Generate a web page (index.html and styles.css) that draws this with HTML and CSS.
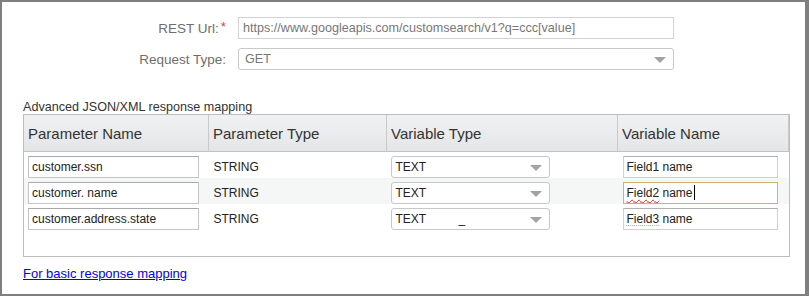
FILE: index.html
```html
<!DOCTYPE html>
<html lang="en">
<head>
  <meta charset="UTF-8" />
  <title>REST response mapping</title>
  <link rel="stylesheet" href="styles.css">
</head>
<body>
  <div class="frame">
    <div class="form-top">
      <div class="field-row">
        <label class="field-label">REST Url:<span class="req">*</span></label>
        <input type="text" class="field-input" value="https://www.googleapis.com/customsearch/v1?q=ccc[value]" readonly>
      </div>
      <div class="field-row">
        <label class="field-label">Request Type:</label>
        <div class="fake-select wide">GET<span class="arrow"></span></div>
      </div>
    </div>

    <div class="mapping-title">Advanced JSON/XML response mapping</div>
    <div class="mapping-box">
      <table class="mapping">
        <thead>
          <tr>
            <th class="c1">Parameter Name</th>
            <th class="c2">Parameter Type</th>
            <th class="c3">Variable Type</th>
            <th class="c4">Variable Name</th>
          </tr>
        </thead>
        <tbody>
          <tr>
            <td><input type="text" class="cell-input" value="customer.ssn" readonly></td>
            <td class="ptype">STRING</td>
            <td><div class="fake-select">TEXT<span class="arrow"></span></div></td>
            <td><div class="cell-input name-box">Field1 name</div></td>
          </tr>
          <tr class="alt">
            <td><input type="text" class="cell-input" value="customer. name" readonly></td>
            <td class="ptype">STRING</td>
            <td><div class="fake-select">TEXT<span class="arrow"></span></div></td>
            <td><div class="cell-input name-box focused"><span class="spell">Field2</span> name<span class="caret"></span></div></td>
          </tr>
          <tr>
            <td><input type="text" class="cell-input" value="customer.address.state" readonly></td>
            <td class="ptype">STRING</td>
            <td><div class="fake-select">TEXT<span class="stray">_</span><span class="arrow"></span></div></td>
            <td><div class="cell-input name-box"><span class="spell faint">Field3</span> name</div></td>
          </tr>
        </tbody>
      </table>
    </div>

    <a href="#" class="basic-link">For basic response mapping</a>
  </div>
</body>
</html>
```

FILE: styles.css
```css
html, body {
  margin: 0;
  padding: 0;
}

body {
  font-family: "Liberation Sans", Arial, sans-serif;
  background-color: #fff;
  color: #333;
}

.frame {
  width: 809px;
  height: 296px;
  box-sizing: border-box;
  border: 2px solid #7f7f7f;
  border-right-width: 4px;
  background-color: #fff;
  overflow: hidden;
}

.form-top {
  padding-top: 15px;
  display: flex;
  flex-direction: column;
  gap: 9px;
}

.field-row {
  display: flex;
  align-items: center;
}

.field-label {
  width: 224px;
  margin-right: 12px;
  text-align: right;
  font-size: 13.5px;
  color: #6e6e6e;
}

.req {
  color: #e23c3c;
  margin-left: 2px;
  position: relative;
  top: -2px;
}

.field-input {
  width: 436px;
  height: 22px;
  box-sizing: border-box;
  border: 1px solid #d2d2d2;
  padding: 0 4px;
  font-family: "Liberation Sans", Arial, sans-serif;
  font-size: 12.6px;
  color: #777;
  outline: none;
  margin: 0;
}

.fake-select {
  position: relative;
  width: 159px;
  height: 22px;
  box-sizing: border-box;
  border: 1px solid #c8c8c8;
  border-radius: 3px;
  padding: 0 4px;
  font-size: 12px;
  line-height: 20px;
  color: #222;
  background-color: #fff;
}

.fake-select.wide {
  width: 436px;
  padding-left: 6px;
  font-size: 12.6px;
  color: #777;
}

.arrow {
  position: absolute;
  right: 7px;
  top: 8px;
  width: 0;
  height: 0;
  border-left: 6px solid transparent;
  border-right: 6px solid transparent;
  border-top: 6px solid #a3a3a3;
}

.stray {
  position: absolute;
  left: 67px;
  top: 0;
}

.mapping-title {
  margin: 30px 0 0 21px;
  font-size: 12.6px;
  line-height: 14px;
  color: #333;
}

.mapping-box {
  margin-left: 21px;
  width: 767px;
  height: 143px;
  box-sizing: border-box;
  border: 1px solid #bdbdbd;
}

.mapping {
  border-collapse: collapse;
  table-layout: fixed;
  width: 765px;
}

.mapping th {
  height: 36px;
  padding: 0 0 0 4px;
  text-align: left;
  font-weight: normal;
  font-size: 15px;
  color: #333;
  background: linear-gradient(#f0f1f2, #e3e5e7);
  border-right: 1px solid #c9c9c9;
  border-bottom: 1px solid #c2c2c2;
}

.mapping th.c1 { width: 180px; }
.mapping th.c2 { width: 173px; }
.mapping th.c3 { width: 226px; }
.mapping th.c4 { width: 166px; }

.mapping td {
  height: 22px;
  padding: 4px 0 0 4px;
  vertical-align: top;
  font-size: 12px;
}

.mapping tr.alt td {
  background-color: #f5f6f6;
}

.ptype {
  line-height: 22px;
  padding-left: 5px !important;
  color: #222;
}

.cell-input {
  display: block;
  width: 171px;
  height: 22px;
  box-sizing: border-box;
  border: 1px solid #c4c4c4;
  border-top-color: #a9a9a9;
  padding: 0 3px;
  margin: 0;
  font-family: "Liberation Sans", Arial, sans-serif;
  font-size: 12px;
  line-height: 20px;
  color: #222;
  background-color: #fff;
  outline: none;
}

.name-box {
  width: 155px;
  margin-left: 1px;
  border-color: #d0d0d0;
  border-top-color: #b0b0b0;
}

.name-box.focused {
  border-color: #cdb36f;
}

.spell {
  text-decoration: underline wavy #e02020;
  text-decoration-thickness: 1px;
  text-underline-offset: 2px;
}

.spell.faint {
  text-decoration: underline dotted #f0a0a0;
}

.caret {
  display: inline-block;
  width: 1px;
  height: 15px;
  margin-left: 1px;
  background-color: #000;
  vertical-align: -3px;
}

.basic-link {
  display: inline-block;
  margin: 9px 0 0 21px;
  font-size: 13px;
  color: #0000ee;
  text-decoration: underline;
}
```
